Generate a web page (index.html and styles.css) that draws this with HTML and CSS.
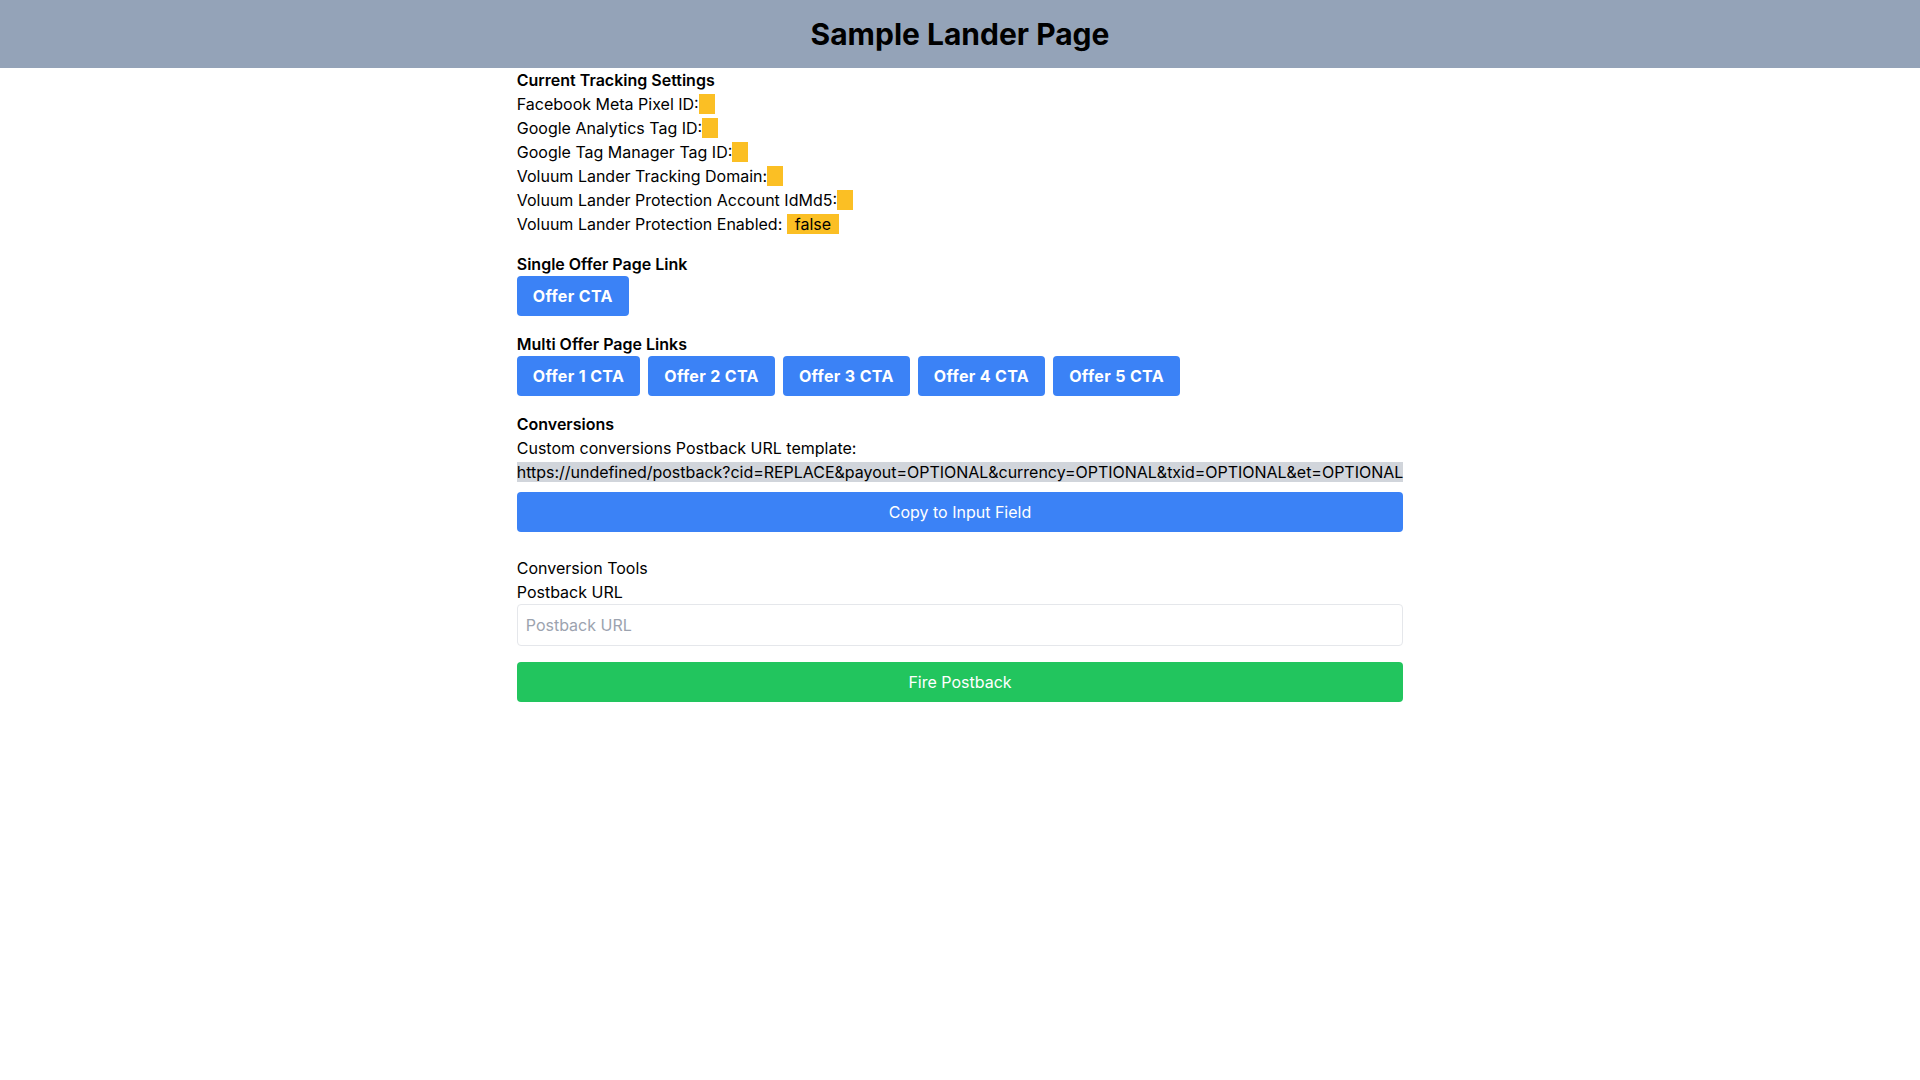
FILE: index.html
```html
<!DOCTYPE html>
<html lang="en">
<head>
<meta charset="utf-8">
<title>Sample Lander Page</title>
<link rel="stylesheet" href="styles.css">
</head>
<body>
<header class="topbar">
  <h1 class="title">Sample Lander Page</h1>
</header>
<main class="content">
  <section class="tracking">
    <h2 class="heading">Current Tracking Settings</h2>
    <div class="row">Facebook Meta Pixel ID:<span class="tag"></span></div>
    <div class="row">Google Analytics Tag ID:<span class="tag"></span></div>
    <div class="row">Google Tag Manager Tag ID:<span class="tag"></span></div>
    <div class="row">Voluum Lander Tracking Domain:<span class="tag"></span></div>
    <div class="row">Voluum Lander Protection Account IdMd5:<span class="tag"></span></div>
    <div class="row">Voluum Lander Protection Enabled: <span class="tag">false</span></div>
  </section>
  <section class="block">
    <h2 class="heading">Single Offer Page Link</h2>
    <div class="btn-row">
      <a class="cta" href="#">Offer CTA</a>
    </div>
  </section>
  <section class="block">
    <h2 class="heading">Multi Offer Page Links</h2>
    <div class="btn-row">
      <a class="cta" href="#">Offer 1 CTA</a>
      <a class="cta" href="#">Offer 2 CTA</a>
      <a class="cta" href="#">Offer 3 CTA</a>
      <a class="cta" href="#">Offer 4 CTA</a>
      <a class="cta" href="#">Offer 5 CTA</a>
    </div>
  </section>
  <section class="block">
    <h2 class="heading">Conversions</h2>
    <div class="row">Custom conversions Postback URL template:</div>
    <div class="row"><span class="url">https://undefined/postback?cid=REPLACE&amp;payout=OPTIONAL&amp;currency=OPTIONAL&amp;txid=OPTIONAL&amp;et=OPTIONAL</span></div>
    <button class="wide blue" type="button">Copy to Input Field</button>
  </section>
  <section class="tools">
    <div class="row">Conversion Tools</div>
    <label class="row" for="pb">Postback URL</label>
    <input id="pb" class="field" type="text" placeholder="Postback URL">
    <button class="wide green" type="button">Fire Postback</button>
  </section>
</main>
</body>
</html>
```
FILE: styles.css
```css
* { box-sizing: border-box; }
html, body { margin: 0; padding: 0; background: #ffffff; }
body {
  font-family: Inter, "Liberation Sans", sans-serif;
  font-size: 16px;
  line-height: 24px;
  color: #000000;
}
.topbar {
  background: #94a3b8;
  padding: 16px;
  text-align: center;
}
.title {
  margin: 0;
  font-size: 30px;
  line-height: 36px;
  font-weight: 700;
}
.content {
  width: fit-content;
  margin: 0 auto;
  display: flex;
  flex-direction: column;
}
.heading {
  margin: 0;
  font-size: 16px;
  line-height: 24px;
  font-weight: 600;
}
.row { display: block; }
.tag {
  background: #fbbf24;
  padding: 0 8px;
}
.block { margin-top: 16px; }
.btn-row {
  display: flex;
  gap: 8px;
}
.cta {
  display: block;
  background: #3b82f6;
  color: #ffffff;
  font-weight: 700;
  letter-spacing: 0.35px;
  text-decoration: none;
  padding: 8px 16px;
  border-radius: 4px;
}
.url { background: #d1d5db; white-space: nowrap; letter-spacing: -0.02px; }
.wide {
  display: block;
  width: 100%;
  border: 0;
  border-radius: 4px;
  padding: 8px 16px;
  font-family: inherit;
  font-size: 16px;
  line-height: 24px;
  color: #ffffff;
  cursor: pointer;
}
.blue { background: #3b82f6; margin-top: 8px; }
.green { background: #22c55e; margin-top: 16px; }
.tools { margin-top: 24px; display: flex; flex-direction: column; }
.field {
  display: block;
  width: 100%;
  border: 1px solid #e5e7eb;
  border-radius: 4px;
  padding: 8px;
  font-family: inherit;
  font-size: 16px;
  line-height: 24px;
  color: #000000;
  background: #ffffff;
  outline: none;
}
.field::placeholder { color: #9ca3af; }
```
